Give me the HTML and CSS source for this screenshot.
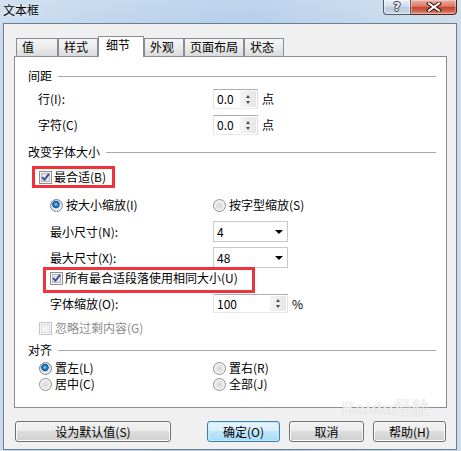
FILE: index.html
```html
<!DOCTYPE html>
<html lang="zh-CN">
<head>
<meta charset="utf-8">
<title>文本框</title>
<link rel="stylesheet" href="styles.css">
</head>
<body>
<div class="window">
  <div class="titlebar">
    <span class="title">文本框</span>
    <div class="caption">
      <div class="cap help"><span class="q">?</span></div>
      <div class="cap close">
        <svg width="16" height="10" viewBox="0 0 16 10"><path d="M3 1.5 L13 8.5 M13 1.5 L3 8.5" stroke="#3a1712" stroke-width="4" stroke-linecap="square"/><path d="M3 1.5 L13 8.5 M13 1.5 L3 8.5" stroke="#fff" stroke-width="2" stroke-linecap="square"/></svg>
      </div>
    </div>
  </div>

  <div class="client">
    <div class="tabs">
      <div class="tab w42">值</div>
      <div class="tab w40">样式</div>
      <div class="tab sel w46">细节</div>
      <div class="tab w40">外观</div>
      <div class="tab w60">页面布局</div>
      <div class="tab w40">状态</div>
    </div>

    <div class="panel">
      <div class="ghead g1"><span>间距</span><i class="rule"></i></div>

      <div class="row in10 r-line">
        <span class="lbl l175">行(I):</span>
        <div class="spin s45"><span class="val">0.0</span><span class="spinbtn"><i class="up"></i><i class="dn"></i></span></div>
        <span class="unit">点</span>
      </div>
      <div class="row in10 r-char">
        <span class="lbl l175">字符(C)</span>
        <div class="spin s45"><span class="val">0.0</span><span class="spinbtn"><i class="up"></i><i class="dn"></i></span></div>
        <span class="unit">点</span>
      </div>

      <div class="ghead g2"><span>改变字体大小</span><i class="rule"></i></div>

      <div class="mark mark1">
        <svg class="cb" width="13" height="13" viewBox="0 0 13 13"><rect x="0.5" y="0.5" width="12" height="12" fill="#f5f5f5" stroke="#8e8f8f"/><rect x="2.5" y="2.5" width="8" height="8" fill="#e2e5ea" stroke="#b4b9c0"/><path d="M3.2 6.2 L5.4 8.8 L10 2.8" stroke="#3f4f93" stroke-width="1.9" fill="none"/></svg>
        <span class="cbtext">最合适(B)</span>
      </div>

      <div class="opt-row r-radio">
        <div class="opt o163"><span class="radio on"></span><span>按大小缩放(I)</span></div>
        <div class="opt"><span class="radio"></span><span>按字型缩放(S)</span></div>
      </div>

      <div class="row in22 r-min">
        <span class="lbl l163">最小尺寸(N):</span>
        <div class="combo"><span class="val">4</span><i class="tri"></i></div>
      </div>
      <div class="row in22 r-max">
        <span class="lbl l163">最大尺寸(X):</span>
        <div class="combo"><span class="val">48</span><i class="tri"></i></div>
      </div>

      <div class="mark mark2">
        <svg class="cb" width="13" height="13" viewBox="0 0 13 13"><rect x="0.5" y="0.5" width="12" height="12" fill="#f5f5f5" stroke="#8e8f8f"/><rect x="2.5" y="2.5" width="8" height="8" fill="#e2e5ea" stroke="#b4b9c0"/><path d="M3.2 6.2 L5.4 8.8 L10 2.8" stroke="#3f4f93" stroke-width="1.9" fill="none"/></svg>
        <span class="cbtext2">所有最合适段落使用相同大小(U)</span>
      </div>

      <div class="row in22 r-scale">
        <span class="lbl l163">字体缩放(O):</span>
        <div class="spin s75 h19"><span class="val">100</span><span class="spinbtn"><i class="up"></i><i class="dn"></i></span></div>
        <span class="unit">%</span>
      </div>

      <div class="opt-row in11 r-ignore">
        <svg class="cb" width="13" height="13" viewBox="0 0 13 13"><rect x="0.5" y="0.5" width="12" height="12" fill="#f7f7f7" stroke="#c6c6c6"/><rect x="2.5" y="2.5" width="8" height="8" fill="#f2f2f2" stroke="#dedede"/></svg>
        <span class="disabled">忽略过剩内容(G)</span>
      </div>

      <div class="ghead g3"><span>对齐</span><i class="rule"></i></div>

      <div class="opt-row in11 r-al1">
        <div class="opt o174"><span class="radio on"></span><span>置左(L)</span></div>
        <div class="opt"><span class="radio"></span><span>置右(R)</span></div>
      </div>
      <div class="opt-row in11">
        <div class="opt o174"><span class="radio"></span><span>居中(C)</span></div>
        <div class="opt"><span class="radio"></span><span>全部(J)</span></div>
      </div>
    </div>

    <div class="btnrow">
      <div class="btn b-default">设为默认值(S)</div>
      <div class="btn def b-ok">确定(O)</div>
      <div class="btn b-cancel">取消</div>
      <div class="btn b-help">帮助(H)</div>
    </div>
  </div>

  <div class="wm"><span class="wm-logo">Bai<span class="paw">du</span>经验</span></div>
</div>
</body>
</html>
```

FILE: styles.css
```css
* { box-sizing: border-box; }
html, body { margin: 0; padding: 0; }
body {
  width: 461px;
  height: 451px;
  overflow: hidden;
  font-family: "Noto Sans CJK SC", "Noto Sans", "DejaVu Sans", sans-serif;
  font-size: 12px;
  color: #000;
}

.window {
  position: relative;
  width: 461px;
  height: 451px;
  display: flex;
  flex-direction: column;
  background:
    linear-gradient(to bottom, rgba(255,255,255,0.15), rgba(255,255,255,0) 30px),
    linear-gradient(to right, #c9dcef 0%, #b8d1ea 35%, #b3cde9 55%, #c2d7ec 80%, #ccdde9 100%);
}

/* title bar */
.titlebar {
  height: 23px;
  display: flex;
  align-items: flex-start;
  padding-left: 3px;
  padding-right: 4px;
}
.title {
  line-height: 16px;
  margin-top: 2px;
  text-shadow: 0 0 5px rgba(255,255,255,0.9);
}
.caption { margin-left: auto; display: flex; }
.cap {
  height: 15px;
  display: flex;
  align-items: center;
  justify-content: center;
}
.help {
  width: 28px;
  border: 1px solid #4d5b6b;
  border-top: none;
  border-radius: 0 0 0 4px;
  background: linear-gradient(#e6edf5, #d3dfeb 45%, #b9cbdd 50%, #c9d8e8);
  box-shadow: inset 0 0 0 1px rgba(255,255,255,0.5);
}
.q {
  color: #fff;
  font: bold 12px/12px "DejaVu Sans", sans-serif;
  text-shadow: 0 0 1px #2c3845, 1px 0 0 #2c3845, -1px 0 0 #2c3845, 0 1px 0 #2c3845, 0 -1px 0 #2c3845;
}
.close {
  width: 46px;
  border: 1px solid #4a231e;
  border-top: none;
  border-left: none;
  border-radius: 0 0 4px 0;
  background: linear-gradient(#eab0a3, #da7a66 45%, #c6432f 52%, #cf6650 80%, #e2957f);
  box-shadow: inset 0 0 0 1px rgba(255,255,255,0.35);
}

/* client area */
.client {
  margin-left: 3px;
  width: 454px;
  height: 427px;
  border: 1px solid #6f7d8c;
  background: #f0f0f0;
  padding: 12px 0 0 10px;
  display: flex;
  flex-direction: column;
}

/* tabs */
.tabs {
  display: flex;
  align-items: flex-end;
  height: 20px;
  padding-left: 2px;
}
.tab {
  height: 18px;
  border: 1px solid #898c95;
  border-bottom: none;
  background: linear-gradient(#f5f5f5, #ebebeb 50%, #dadada);
  padding-left: 5px;
  line-height: 16px;
  white-space: nowrap;
}
.tab.sel {
  position: relative;
  z-index: 1;
  height: 21px;
  margin-bottom: -1px;
  background: #fff;
  padding-left: 7px;
}
.w40 { width: 40px; }
.w42 { width: 42px; }
.w46 { width: 46px; }
.w60 { width: 60px; }

/* panel */
.panel {
  width: 433px;
  height: 352px;
  border: 1px solid #898c95;
  background: #fff;
  padding-left: 13px;
  display: flex;
  flex-direction: column;
}
.ghead {
  display: flex;
  align-items: center;
  height: 16px;
  line-height: 16px;
  margin-right: 10px;
}
.ghead .rule {
  flex: 1;
  height: 1px;
  background: #a7a7a7;
  margin-left: 6px;
}
.g1 { margin-top: 11px; }
.g2 { margin-top: 9px; }
.g3 { margin-top: 6px; }

.row {
  display: flex;
  align-items: center;
  height: 20px;
}
.in10 { padding-left: 10px; }
.in11 { padding-left: 11px; }
.in22 { padding-left: 22px; }
.lbl { flex: 0 0 auto; line-height: 16px; }
.l175 { width: 175px; }
.l163 { width: 163px; }
.unit { margin-left: 4px; line-height: 16px; }

.r-line { margin-top: 5px; }
.r-char { margin-top: 6px; }
.r-min { margin-top: 8px; height: 21px; }
.r-max { margin-top: 5px; height: 21px; }
.r-scale { margin-top: 1px; height: 19px; }

/* spin boxes */
.spin {
  display: flex;
  height: 20px;
  border: 1px solid;
  border-color: #abadb3 #dbdfe6 #e3e9ef #e2e3ea;
  background: #fff;
}
.s45 { width: 45px; }
.s75 { width: 75px; }
.h19 { height: 19px; }
.spin .val {
  flex: 1;
  padding-left: 3px;
  line-height: 17px;
}
.spinbtn {
  width: 16px;
  margin: 1px 1px 1px 0;
  display: flex;
  flex-direction: column;
  align-items: center;
  justify-content: center;
  gap: 3px;
  background: linear-gradient(to right, #f4f4f4, #e6e6e6);
}
.spinbtn .up, .spinbtn .dn {
  width: 0;
  height: 0;
  border-left: 2.5px solid transparent;
  border-right: 2.5px solid transparent;
}
.spinbtn .up { border-bottom: 3px solid #4a4a4a; }
.spinbtn .dn { border-top: 3px solid #4a4a4a; }

/* combo boxes */
.combo {
  width: 75px;
  height: 21px;
  border: 1px solid #c7c9cc;
  background: #fff;
  display: flex;
  align-items: center;
  padding-left: 3px;
}
.combo .val { flex: 1; line-height: 16px; }
.combo .tri {
  width: 0;
  height: 0;
  border-left: 4px solid transparent;
  border-right: 4px solid transparent;
  border-top: 4px solid #000;
  margin-right: 4px;
}

/* red annotation boxes */
.mark {
  border: 3px solid #f0323c;
  display: flex;
  align-items: center;
  align-self: flex-start;
}
.mark1 {
  margin-top: 6px;
  margin-left: 4px;
  width: 83px;
  height: 22px;
  padding-left: 4px;
}
.mark2 {
  margin-top: -1px;
  margin-left: 15px;
  width: 212px;
  height: 26px;
  padding-left: 4px;
  padding-bottom: 4px;
}
.cb { flex: 0 0 auto; display: block; }
.cbtext { margin-left: 2px; line-height: 16px; }
.cbtext2 { margin-left: 2px; line-height: 16px; white-space: nowrap; }

/* option rows */
.opt-row {
  display: flex;
  align-items: center;
  height: 16px;
}
.r-radio { margin-top: 9px; padding-left: 22px; }
.r-ignore { margin-top: 7px; }
.r-ignore .disabled { margin-left: 3px; color: #8d8d8d; line-height: 16px; }
.r-al1 { margin-top: 2px; }
.opt {
  display: flex;
  align-items: center;
  gap: 3px;
  line-height: 16px;
  white-space: nowrap;
}
.o163 { width: 163px; }
.o174 { width: 174px; }
.radio {
  flex: 0 0 auto;
  width: 13px;
  height: 13px;
  border-radius: 50%;
  border: 1px solid #909090;
  background: radial-gradient(circle at 50% 50%, #d6d6d6 0, #e4e4e4 3px, #f4f4f4 5px);
}
.radio.on {
  border-color: #7a8591;
  background: radial-gradient(circle at 45% 40%, #9fdcff 0, #2f8fd8 1.6px, #10508f 3.4px, #c9cdd2 3.9px, #eef0f2 5.5px);
}

/* buttons */
.btnrow {
  display: flex;
  margin-top: 13px;
  height: 21px;
}
.btn {
  height: 21px;
  border: 1px solid #707070;
  border-radius: 3px;
  background: linear-gradient(#f2f2f2, #ebebeb 45%, #dddddd 50%, #cfcfcf);
  box-shadow: inset 0 0 0 1px #fbfbfb;
  display: flex;
  align-items: center;
  justify-content: center;
  line-height: 16px;
}
.btn.def {
  border-color: #3c7fb1;
  background: linear-gradient(#e8f5fc, #d9effb 45%, #bee6fd 50%, #a9dbf6);
  box-shadow: inset 0 0 0 1px #c6ebfd;
}
.b-default { margin-left: 1px; width: 156px; }
.b-ok { margin-left: 36px; width: 73px; }
.b-cancel { margin-left: 9px; width: 75px; }
.b-help { margin-left: 9px; width: 73px; }

/* watermark */
.wm {
  position: absolute;
  left: 342px;
  top: 399px;
  pointer-events: none;
}
.wm-logo {
  font: bold 17px/20px "Liberation Sans", sans-serif;
  color: rgba(255,255,255,0.75);
  text-shadow: 0 0 1px rgba(150,150,150,0.5);
  letter-spacing: 1px;
}
```
